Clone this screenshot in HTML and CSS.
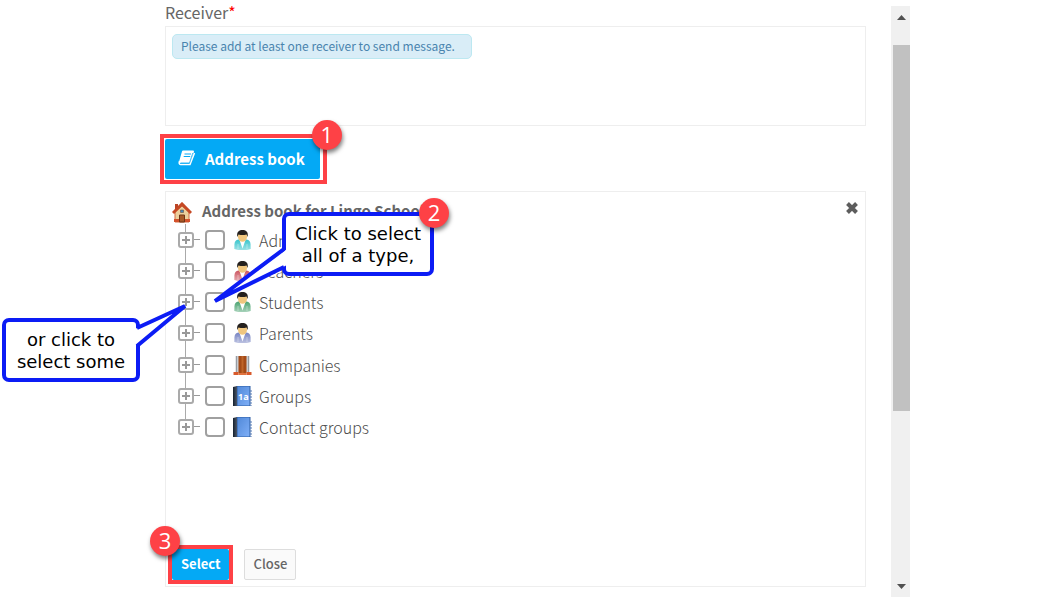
FILE: index.html
```html
<!DOCTYPE html>
<html lang="en">

<head>
    <meta charset="UTF-8">
    <meta name="viewport" content="width=device-width, initial-scale=1.0">
    <title>Address book</title>
    <link rel="stylesheet" href="styles.css">
</head>

<body>

    <!-- shared icons -->
    <svg class="sprites" width="0" height="0" aria-hidden="true">
        <defs>
            <linearGradient id="shine" x1="0" y1="0" x2="0" y2="1">
                <stop offset="0" stop-color="#fff" stop-opacity="0" />
                <stop offset="1" stop-color="#fff" stop-opacity=".5" />
            </linearGradient>
            <linearGradient id="cover" x1="0" y1="0" x2="1" y2="1">
                <stop offset="0" stop-color="#5088d8" />
                <stop offset="1" stop-color="#80b0f8" />
            </linearGradient>
            <linearGradient id="spine" x1="0" y1="0" x2="1" y2="0">
                <stop offset="0" stop-color="#15202e" />
                <stop offset="1" stop-color="#4a5668" />
            </linearGradient>
        </defs>
        <symbol id="person" viewBox="0 0 18 20">
            <path d="M1 19V14.500Q1 10 5 9.500H13Q17 10 17 14.500V19Q9 21 1 19Z" fill="currentColor" />
            <path d="M1 19V14.500Q1 10 5 9.500H13Q17 10 17 14.500V19Q9 21 1 19Z" fill="url(#shine)" />
            <path d="M6 10L9 18.500L12 10Z" fill="#fff" />
            <path d="M4.500 14V19M13.500 14V19" stroke="#fff" stroke-opacity=".5" stroke-width=".7" />
            <ellipse cx="9" cy="6.500" rx="4.600" ry="5.200" fill="#f0c67e" />
            <path d="M3.800 7C2.800 1.500 6 0 9 0S15.200 1.500 14.200 7L13 4.500Q9 5.500 5 4.500Z" fill="#24201e" />
        </symbol>
        <symbol id="book" viewBox="0 0 19 20">
            <path d="M4 0H17V20H4Z" fill="url(#cover)" stroke="#2d5da3" />
            <path d="M0 1L4 0V20H0Z" fill="url(#spine)" />
            <path d="M18 4V20" stroke="#5379b3" stroke-dasharray="2 1" />
        </symbol>
    </svg>

    <main class="form">

        <h2 class="field-name" id="receiver">Receiver<span class="required">*</span></h2>
        <div class="receivers" role="group" aria-labelledby="receiver">
            <span class="notice">Please add at least one receiver to send message.</span>
        </div>

        <div class="step step-open">
            <button class="btn btn-primary btn-large" type="button">
                <svg width="18" height="16" viewBox="0 0 18 16" aria-hidden="true">
                    <path d="M5 1.500H15L11.500 12H2Z" fill="#fff" stroke="#fff" stroke-width="2" stroke-linejoin="round" />
                    <path d="M6.500 4H13M5.700 6.500H12.200" stroke="#04a9f5" />
                    <path d="M1.500 11Q.5 14.500 2.500 14.500H12L16.500 3" fill="none" stroke="#fff" stroke-width="1.500" />
                    <path d="M2.500 13H11.500L14.800 3" fill="none" stroke="#04a9f5" stroke-width=".8" />
                </svg>
                Address book
            </button>
            <span class="badge">1</span>
        </div>

        <section class="panel">
            <header class="panel-head">
                <svg class="home" width="20" height="21" viewBox="0 0 20 21" aria-hidden="true">
                    <path d="M3 10L10 4L17 10V20H3Z" fill="#eccf9c" stroke="#cf6c40" />
                    <path d="M3 2H6V7H3Z" fill="#bb4425" />
                    <path d="M1 11L10 2L19 11" fill="none" stroke="#c54824" stroke-width="3" />
                    <path d="M7.500 13H12.500V20H7.500Z" fill="#a75826" stroke="#6e3516" />
                    <path d="M8.500 8H11.500V10.500H8.500Z" fill="#4486bd" stroke="#71503a" stroke-width=".6" />
                    <path d="M2 17H7V20H2ZM13 17H18V20H13Z" fill="#d4522c" />
                </svg>
                <h3 class="panel-title">Address book for Lingo School</h3>
                <button class="dismiss" type="button" aria-label="Close address book">
                    <svg width="14" height="14" viewBox="0 0 14 14" aria-hidden="true">
                        <path d="M2.500 2.500L11.500 11.500M11.500 2.500L2.500 11.500" stroke="#5d5d5d" stroke-width="4" />
                    </svg>
                </button>
            </header>

            <ul class="tree">
                <li class="node">
                    <button class="expand" type="button" aria-label="Expand Administrators"></button>
                    <input class="tick" type="checkbox" id="admins">
                    <label class="node-label" for="admins"><svg class="icon admin"><use href="#person" /></svg>Administrators</label>
                </li>
                <li class="node">
                    <button class="expand" type="button" aria-label="Expand Teachers"></button>
                    <input class="tick" type="checkbox" id="teachers">
                    <label class="node-label" for="teachers"><svg class="icon teacher"><use href="#person" /></svg>Teachers</label>
                </li>
                <li class="node">
                    <button class="expand" type="button" aria-label="Expand Students"></button>
                    <input class="tick" type="checkbox" id="students">
                    <label class="node-label" for="students"><svg class="icon student"><use href="#person" /></svg>Students</label>
                </li>
                <li class="node">
                    <button class="expand" type="button" aria-label="Expand Parents"></button>
                    <input class="tick" type="checkbox" id="parents">
                    <label class="node-label" for="parents"><svg class="icon parent"><use href="#person" /></svg>Parents</label>
                </li>
                <li class="node">
                    <button class="expand" type="button" aria-label="Expand Companies"></button>
                    <input class="tick" type="checkbox" id="companies">
                    <label class="node-label" for="companies">
                        <svg class="icon" viewBox="0 0 18 20">
                            <path d="M2 1H16V18H2Z" fill="#c9cdd2" />
                            <path d="M3 1V18M15 1V18" stroke="#979ca2" />
                            <path d="M5 1H13V18H5Z" fill="#a44b18" />
                            <path d="M9 1V18" stroke="#bf6529" stroke-width="2" />
                            <path d="M0 17H5V20H0ZM13 17H18V20H13Z" fill="#d85a2c" />
                            <path d="M5 18H13V20H5Z" fill="#e0733f" />
                        </svg>Companies</label>
                </li>
                <li class="node">
                    <button class="expand" type="button" aria-label="Expand Groups"></button>
                    <input class="tick" type="checkbox" id="groups">
                    <label class="node-label" for="groups">
                        <svg class="icon" viewBox="0 0 19 20">
                            <use href="#book" />
                            <text class="book-text" x="5" y="14">1a</text>
                        </svg>Groups</label>
                </li>
                <li class="node">
                    <button class="expand" type="button" aria-label="Expand Contact groups"></button>
                    <input class="tick" type="checkbox" id="contacts">
                    <label class="node-label" for="contacts"><svg class="icon"><use href="#book" /></svg>Contact groups</label>
                </li>
            </ul>

            <footer class="actions">
                <div class="step step-select">
                    <button class="btn btn-primary" type="button">Select</button>
                    <span class="badge">3</span>
                </div>
                <button class="btn btn-plain" type="button">Close</button>
            </footer>

            <div class="callout callout-all">
                <svg class="tail" width="82" height="62" viewBox="210 244 82 62" aria-hidden="true">
                    <path d="M287 249L216 301L287 265Z" fill="#fff" />
                    <path d="M284 249L215 301L284 267" fill="none" stroke="#0c1cf5" stroke-width="4" />
                </svg>
                Click to select<br>all of a type,
                <span class="badge">2</span>
            </div>

            <div class="callout callout-some">
                <svg class="tail" width="58" height="52" viewBox="134 300 58 52" aria-hidden="true">
                    <path d="M135 329L184 306L135 346Z" fill="#fff" />
                    <path d="M137 328L185 306L137 346" fill="none" stroke="#0c1cf5" stroke-width="4" />
                </svg>
                or click to<br>select some
            </div>
        </section>

    </main>

    <div class="scrollbar">
        <button class="arrow" type="button" aria-label="Scroll up">
            <svg width="9" height="5" viewBox="0 0 9 5"><path d="M0 5L4.500 0L9 5Z" fill="#505050" /></svg>
        </button>
        <div class="track">
            <div class="thumb"></div>
        </div>
        <button class="arrow" type="button" aria-label="Scroll down">
            <svg width="9" height="5" viewBox="0 0 9 5"><path d="M0 0L4.500 5L9 0Z" fill="#505050" /></svg>
        </button>
    </div>

</body>

</html>
```

FILE: styles.css
```css
* {
    box-sizing: border-box;
}

body {
    display: flex;
    gap: 25px;
    min-height: 100vh;
    margin: 0;
    padding: 0 138px 0 165px;
    background-color: white;
    color: #666;
    font-family: "Noto Sans CJK SC", "Open Sans", sans-serif;
    font-size: 16px;
}

button {
    margin: 0;
    padding: 0;
    border: none;
    background: none;
    font-family: inherit;
    cursor: pointer;
}

.sprites {
    position: absolute;
}

.form {
    flex: 1;
}

.field-name {
    margin: 0;
    padding-bottom: 2px;
    font-size: 16px;
    font-weight: 400;
    line-height: 24px;
}

.required {
    color: red;
}

.receivers {
    min-height: 100px;
    padding: 7px 6px;
    border: 1px solid #eee;
}

.notice {
    display: block;
    width: fit-content;
    padding: 0 16px 2px 8px;
    border: 1px solid #bce8f1;
    border-radius: 5px;
    background-color: #d9edf7;
    color: #4984ae;
    font-size: 12px;
    line-height: 21px;
}

/* buttons */
.btn {
    height: 31px;
    padding: 0 8px 2px;
    border-radius: 2px;
    font-size: 13px;
    font-weight: 700;
}

.btn-primary {
    padding: 0 9px 2px;
    background-color: #04a9f5;
    color: white;
}

.btn-large {
    display: flex;
    align-items: center;
    gap: 9px;
    height: 40px;
    padding: 0 15px 2px 13px;
    font-size: 15px;
}

.btn-plain {
    border: 1px solid #ddd;
    background-color: #fafafa;
    color: #666;
    font-weight: 500;
}

/* numbered steps */
.step {
    position: relative;
    width: fit-content;
}

.step::before {
    content: "";
    position: absolute;
    inset: -5px -7px -5px -5px;
    border: 4px solid #fe4146;
}

.step-open {
    margin: 13px 0 12px;
}

.step-select::before {
    inset: -4px;
}

.badge {
    position: absolute;
    width: 30px;
    height: 30px;
    border-radius: 50%;
    background-color: #fe4146;
    box-shadow: 1px 3px 4px rgba(0, 0, 0, 0.5);
    color: white;
    font-family: "Open Sans", sans-serif;
    font-size: 22px;
    line-height: 28px;
    text-align: center;
}

.step-open .badge {
    top: -19px;
    right: -22px;
}

.step-select .badge {
    top: -23px;
    left: -22px;
}

/* address book */
.panel {
    position: relative;
    display: flex;
    flex-direction: column;
    min-height: 396px;
    padding: 8px 6px 6px;
    border: 1px solid #eee;
}

.panel-head {
    display: flex;
    gap: 10px;
    height: 24px;
}

.home {
    margin-top: 2px;
}

.panel-title {
    flex: 1;
    margin: 0;
    font-size: 15px;
    font-weight: 700;
    line-height: 22px;
}

.dismiss {
    height: 14px;
}

.tree {
    display: flex;
    flex-direction: column;
    height: 219px;
    margin: 0;
    padding: 0 0 0 6px;
    list-style: none;
}

.node {
    position: relative;
    display: flex;
    flex: 1;
    align-items: center;
}

.node::before {
    content: "";
    position: absolute;
    top: 0;
    bottom: 0;
    left: 7px;
    width: 1px;
    background-color: #aaa;
}

.node:last-child::before {
    bottom: 50%;
}

.expand {
    position: relative;
    width: 16px;
    height: 16px;
    margin-right: 11px;
    border: 2px solid #aaa;
    border-radius: 3px;
    background:
        linear-gradient(#999, #999) center / 8px 2px no-repeat,
        linear-gradient(#999, #999) center / 2px 8px no-repeat,
        white;
}

.expand::after {
    content: "";
    position: absolute;
    top: 5px;
    left: 14px;
    width: 6px;
    height: 1px;
    background-color: #999;
}

.tick {
    appearance: none;
    width: 20px;
    height: 20px;
    margin: 0 8px 0 0;
    border: 2px solid #a0a0a0;
    border-radius: 4px;
    background-color: white;
}

.tick:checked {
    background-color: #04a9f5;
}

.node-label {
    display: flex;
    align-items: center;
    gap: 7px;
    color: #4c4c4c;
    font-size: 16px;
    font-weight: 300;
    line-height: 24px;
}

.icon {
    width: 19px;
    height: 20px;
}

.admin {
    color: #38c5cc;
}

.teacher {
    color: #cc5560;
}

.student {
    color: #4ba371;
}

.parent {
    color: #7783c2;
}

.book-text {
    fill: white;
    font-family: "Open Sans", sans-serif;
    font-size: 9px;
    font-weight: 700;
}

.actions {
    display: flex;
    gap: 15px;
    margin-top: auto;
}

/* callouts over the panel */
.callout {
    position: absolute;
    padding: 7px 0 5px;
    border: 4px solid #0c1cf5;
    border-radius: 7px;
    background-color: white;
    color: black;
    font-family: "DejaVu Sans", Verdana, sans-serif;
    font-size: 18px;
    line-height: 22px;
    text-align: center;
}

.callout-all {
    top: 20px;
    left: 116px;
    width: 152px;
}

.callout-some {
    top: 126px;
    left: -164px;
    width: 138px;
}

.tail {
    position: absolute;
}

.callout-all .tail {
    top: 28px;
    left: -76px;
}

.callout-some .tail {
    top: -22px;
    left: 128px;
}

.callout .badge {
    top: -18px;
    right: -19px;
}

/* scrollbar */
.scrollbar {
    display: flex;
    flex-direction: column;
    width: 19px;
    margin-top: 6px;
    background-color: #f0f0f0;
}

.arrow {
    display: flex;
    align-items: center;
    justify-content: center;
    height: 22px;
    padding-left: 2px;
}

.track {
    flex: 1;
    padding: 17px 0 0 2px;
}

.thumb {
    height: 69%;
    background-color: #c1c1c1;
}
```
